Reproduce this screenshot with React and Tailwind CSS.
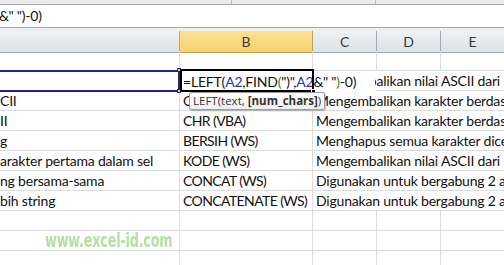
import React from 'react';

const cellFont = { fontFamily: 'Lato, "Open Sans", sans-serif' };

const rows = [
  { a: '', b: '', c: '' },
  { a: '', b: '', c: 'Mengembalikan nilai ASCII dari karakter' },
  { a: 'CII', b: 'CHAR (WS)', c: 'Mengembalikan karakter berdasarkan' },
  { a: 'II', b: 'CHR (VBA)', c: 'Mengembalikan karakter berdasarkan' },
  { a: 'g', b: 'BERSIH (WS)', c: 'Menghapus semua karakter dicetak' },
  { a: 'arakter pertama dalam sel', b: 'KODE (WS)', c: 'Mengembalikan nilai ASCII dari' },
  { a: 'ng bersama-sama', b: 'CONCAT (WS)', c: 'Digunakan untuk bergabung 2 atau' },
  { a: 'bih string', b: 'CONCATENATE (WS)', c: 'Digunakan untuk bergabung 2 atau' },
  { a: '', b: '', c: '' },
  { a: '', b: '', c: '' },
  { a: '', b: '', c: '' },
];

function Row({ r }) {
  const cell = 'h-5 border-r border-b border-[#dadcdd] overflow-hidden whitespace-nowrap flex items-center';
  return (
    <div className="grid grid-cols-[180px_133px_64px_64px_1fr]">
      <div className={`${cell} pl-0`}>{r.a}</div>
      <div className={`${cell} pl-[3px] tracking-[-0.6px]`}>{r.b}</div>
      {r.c ? (
        <div className={`${cell} col-span-3 pl-[3px] border-r-0`}>{r.c}</div>
      ) : (
        <>
          <div className={cell}></div>
          <div className={cell}></div>
          <div className={`${cell} border-r-0`}></div>
        </>
      )}
    </div>
  );
}

export default function App() {
  return (
    <div className="relative w-[504px] h-[265px] overflow-hidden bg-white text-[14px] tracking-[-0.2px] text-[#111]" style={cellFont}>
      {/* ribbon edge */}
      <div className="h-[5px] bg-[#e8eaed] border-b border-[#a9abae] flex">
        <div className="w-[232px] border-r border-[#b8babd]"></div>
        <div className="w-[144px] border-r border-[#b8babd]"></div>
      </div>
      {/* formula bar */}
      <div className="h-[23px] border-b border-[#a7a9ac] flex items-center leading-none">
        <span className="-ml-[1px]">&amp;" ")-0)</span>
      </div>
      <div className="h-[3px] bg-[#eceef1]"></div>

      {/* column headers */}
      <div className="grid grid-cols-[180px_133px_64px_64px_1fr] h-5 text-[#3b3b3b] text-[14px]">
        <div className="border-r border-b border-[#9eabbb] bg-gradient-to-b from-[#eef1f5] to-[#dde2e8]"></div>
        <div className="border-r border-b border-[#c9a04a] bg-gradient-to-b from-[#fbe193] to-[#f6d36f] flex items-center justify-center">B</div>
        <div className="border-r border-b border-[#9eabbb] bg-gradient-to-b from-[#eef1f5] to-[#dde2e8] flex items-center justify-center">C</div>
        <div className="border-r border-b border-[#9eabbb] bg-gradient-to-b from-[#eef1f5] to-[#dde2e8] flex items-center justify-center">D</div>
        <div className="border-b border-[#9eabbb] bg-gradient-to-b from-[#eef1f5] to-[#dde2e8] flex items-center justify-center">E</div>
      </div>

      {rows.map((r, i) => (
        <Row key={i} r={r} />
      ))}

      {/* A2 reference highlight */}
      <div className="absolute left-[-4px] top-[70px] w-[184px] h-[22px] border-2 border-[#23238e]"></div>
      <div className="absolute left-[177px] top-[68px] w-[4px] h-[4px] bg-[#e8d24a] border border-[#23238e]"></div>
      <div className="absolute left-[177px] top-[89px] w-[4px] h-[4px] bg-[#e8d24a] border border-[#23238e]"></div>

      {/* editing cell B2 */}
      <div className="absolute left-[181px] top-[71px] w-[194px] h-[20px] bg-white flex items-center pl-[2px] whitespace-nowrap">
        <span>=LEFT(</span>
        <span className="text-[#2f2fb0]">A2</span>
        <span>,FIND</span>
        <span className="text-[#2a8a2a]">(</span>
        <span>")",</span>
        <span className="text-[#2f2fb0]">A2</span>
        <span>&amp;" "</span>
        <span className="text-[#2a8a2a]">)</span>
        <span>-0)</span>
      </div>
      <div className="absolute left-[180px] top-[69px] w-[134px] h-[23px] border-2 border-black"></div>
      <div className="absolute left-[311px] top-[89px] w-[5px] h-[5px] bg-black border border-white"></div>

      {/* function tooltip */}
      <div
        className="absolute left-[189px] top-[92px] h-[18px] px-[3px] flex items-center gap-[3px] bg-gradient-to-b from-white to-[#eef0f3] border border-[#9a9ca0] rounded-[2px] shadow-[1px_1px_2px_rgba(0,0,0,0.25)] text-[11.5px] tracking-normal text-[#333] whitespace-nowrap"
        style={{ fontFamily: '"Open Sans", "Noto Sans", sans-serif' }}
      >
        <span>LEFT(text,</span>
        <span><span className="font-bold">[num_chars]</span>)</span>
      </div>

      {/* watermark */}
      <div
        className="absolute left-[45px] top-[225px] origin-left scale-x-[0.64] text-[20px] font-black text-[#a2d98a] opacity-80 tracking-[-0.3px] blur-[0.5px] whitespace-nowrap"
        style={{ fontFamily: '"DejaVu Sans", "Liberation Sans", sans-serif' }}
      >
        www.excel-id.com
      </div>
    </div>
  );
}
